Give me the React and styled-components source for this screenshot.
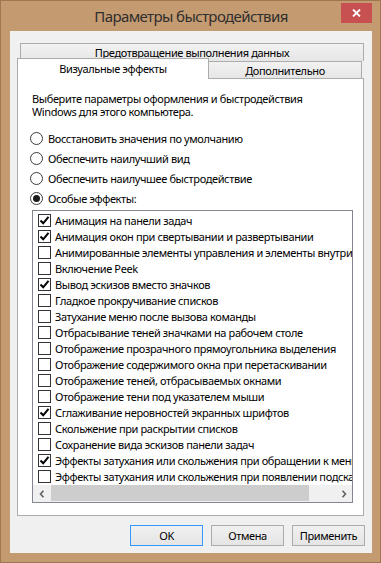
import React from 'react';
import styled, { createGlobalStyle } from 'styled-components';

const FONT = `"Segoe UI", "Noto Sans", "Open Sans", sans-serif`;

const Global = createGlobalStyle`
  html, body { margin: 0; padding: 0; background: #ffffff; }
  body { font-family: ${FONT}; font-size: 11px; letter-spacing: -0.38px; color: #000; }
  * { box-sizing: border-box; }
`;

const Window = styled.div`
  width: 381px;
  height: 563px;
  background: #c49a70;
  border: 1px solid #a07650;
  padding: 0 8px 9px 9px;
  display: flex;
  flex-direction: column;
`;

const TitleBar = styled.div`
  height: 30px;
  flex: 0 0 30px;
  display: grid;
  grid-template-columns: 31px 1fr 31px;
`;

const Title = styled.div`
  grid-column: 2;
  text-align: center;
  font-size: 15px;
  letter-spacing: -0.6px;
  line-height: 30px;
  color: #2e2e2e;
  white-space: nowrap;
`;

const CloseButton = styled.div`
  grid-column: 3;
  width: 31px;
  height: 20px;
  margin-top: 2px;
  background: #c75050;
  display: flex;
  align-items: center;
  justify-content: center;
`;

const Client = styled.div`
  flex: 1;
  background: #f0f0f0;
  display: flex;
  flex-direction: column;
  padding: 12px 8px 6px 7px;
`;

const TabRow1 = styled.div`
  display: flex;
  margin-left: 3px;
`;

const Tab = styled.div`
  height: ${p => p.$h}px;
  width: ${p => p.$w}px;
  flex: 0 0 ${p => p.$w}px;
  border: 1px solid #acacac;
  border-bottom: none;
  background: ${p => (p.$active ? '#ffffff' : 'linear-gradient(#f2f2f2, #e6e6e6)')};
  display: flex;
  align-items: center;
  justify-content: center;
  padding-bottom: ${p => (p.$active ? 2 : 0)}px;
  white-space: nowrap;
  position: relative;
  z-index: ${p => (p.$active ? 2 : 1)};
  margin-left: ${p => p.$ml || 0}px;
  margin-bottom: ${p => p.$mb || 0}px;
`;

const TabRow2 = styled.div`
  display: flex;
  align-items: flex-end;
  height: 20px;
  margin-top: -3px;
`;

const Panel = styled.div`
  height: 438px;
  flex: 0 0 438px;
  background: #ffffff;
  border: 1px solid #acacac;
  display: flex;
  flex-direction: column;
  padding: 13px 10px 0 14px;
`;

const Intro = styled.div`
  line-height: 13px;
`;

const RadioGroup = styled.div`
  display: flex;
  flex-direction: column;
  margin-top: 10px;
  margin-left: -2px;
`;

const RadioRow = styled.div`
  height: 20px;
  display: flex;
  align-items: center;
  gap: 5px;
  white-space: nowrap;
`;

const RadioCircle = styled.span`
  width: 13px;
  height: 13px;
  flex: 0 0 13px;
  border-radius: 50%;
  border: 1px solid #3c3c3c;
  background: #fff;
  display: flex;
  align-items: center;
  justify-content: center;
  &::after {
    content: '';
    width: 7px;
    height: 7px;
    border-radius: 50%;
    background: ${p => (p.$checked ? '#1a1a1a' : 'transparent')};
  }
`;

const ListBox = styled.div`
  margin-top: 2px;
  width: 321px;
  height: 293px;
  border: 1px solid #828790;
  background: #fff;
  display: flex;
  flex-direction: column;
  overflow: hidden;
  padding-top: 1px;
`;

const ListRows = styled.div`
  flex: 1;
  overflow: hidden;
`;

const ListRow = styled.div`
  height: 16px;
  display: flex;
  align-items: center;
  gap: 4px;
  padding-left: 5px;
  white-space: nowrap;
`;

const CheckBox = styled.span`
  width: 13px;
  height: 13px;
  flex: 0 0 13px;
  border: 1px solid #333333;
  background: #fff;
  display: flex;
  align-items: center;
  justify-content: center;
`;

const ScrollBar = styled.div`
  height: 17px;
  flex: 0 0 17px;
  display: flex;
  background: #f0f0f0;
`;

const ScrollArrow = styled.div`
  width: 17px;
  flex: 0 0 17px;
  display: flex;
  align-items: center;
  justify-content: center;
`;

const ScrollThumb = styled.div`
  flex: 0 0 258px;
  margin: 0 0 1px 1px;
  background: #cdcdcd;
`;

const ScrollTrack = styled.div`
  flex: 1;
`;

const Buttons = styled.div`
  display: flex;
  justify-content: flex-end;
  gap: 8px;
  margin-top: 9px;
  margin-right: -1px;
`;

const Button = styled.div`
  width: 73px;
  height: 21px;
  border: 1px solid ${p => (p.$default ? '#3399ff' : '#acacac')};
  background: linear-gradient(#f0f0f0, #e5e5e5);
  display: flex;
  align-items: center;
  justify-content: center;
  font-size: 11px;
`;

const Check = () => (
  <svg width="11" height="11" viewBox="0 0 11 11">
    <path d="M1.5 5.5 L4.2 8.3 L9.5 1.8" fill="none" stroke="#000" strokeWidth="2" />
  </svg>
);

const Chevron = ({ dir }) => (
  <svg width="6" height="8" viewBox="0 0 6 8">
    <path
      d={dir === 'left' ? 'M4.5 0.8 L1.5 4 L4.5 7.2' : 'M1.5 0.8 L4.5 4 L1.5 7.2'}
      fill="none"
      stroke="#606060"
      strokeWidth="1.6"
    />
  </svg>
);

const items = [
  ['Анимация на панели задач', true],
  ['Анимация окон при свертывании и развертывании', true],
  ['Анимированные элементы управления и элементы внутри окна', false],
  ['Включение Peek', false],
  ['Вывод эскизов вместо значков', true],
  ['Гладкое прокручивание списков', false],
  ['Затухание меню после вызова команды', false],
  ['Отбрасывание теней значками на рабочем столе', false],
  ['Отображение прозрачного прямоугольника выделения', false],
  ['Отображение содержимого окна при перетаскивании', false],
  ['Отображение теней, отбрасываемых окнами', false],
  ['Отображение тени под указателем мыши', false],
  ['Сглаживание неровностей экранных шрифтов', true],
  ['Скольжение при раскрытии списков', false],
  ['Сохранение вида эскизов панели задач', false],
  ['Эффекты затухания или скольжения при обращении к меню', true],
  ['Эффекты затухания или скольжения при появлении подсказок', false],
];

const radios = [
  ['Восстановить значения по умолчанию', false],
  ['Обеспечить наилучший вид', false],
  ['Обеспечить наилучшее быстродействие', false],
  ['Особые эффекты:', true],
];

export default function App() {
  return (
    <>
      <Global />
      <Window>
        <TitleBar>
          <Title>Параметры быстродействия</Title>
          <CloseButton>
            <svg width="9" height="8" viewBox="0 0 9 8">
              <path d="M1 0.5 L8 7.5 M8 0.5 L1 7.5" stroke="#fff" strokeWidth="1.8" />
            </svg>
          </CloseButton>
        </TitleBar>
        <Client>
          <TabRow1>
            <Tab $w={344} $h={18}>Предотвращение выполнения данных</Tab>
          </TabRow1>
          <TabRow2>
            <Tab $w={192} $h={21} $active $mb={-1}>Визуальные эффекты</Tab>
            <Tab $w={154} $h={17} $ml={-1}>Дополнительно</Tab>
          </TabRow2>
          <Panel>
            <Intro>
              Выберите параметры оформления и быстродействия
              <br />
              Windows для этого компьютера.
            </Intro>
            <RadioGroup>
              {radios.map(([label, checked]) => (
                <RadioRow key={label}>
                  <RadioCircle $checked={checked} />
                  {label}
                </RadioRow>
              ))}
            </RadioGroup>
            <ListBox>
              <ListRows>
                {items.map(([label, checked]) => (
                  <ListRow key={label}>
                    <CheckBox>{checked && <Check />}</CheckBox>
                    {label}
                  </ListRow>
                ))}
              </ListRows>
              <ScrollBar>
                <ScrollArrow>
                  <Chevron dir="left" />
                </ScrollArrow>
                <ScrollThumb />
                <ScrollTrack />
                <ScrollArrow>
                  <Chevron dir="right" />
                </ScrollArrow>
              </ScrollBar>
            </ListBox>
          </Panel>
          <Buttons>
            <Button $default>OK</Button>
            <Button>Отмена</Button>
            <Button>Применить</Button>
          </Buttons>
        </Client>
      </Window>
    </>
  );
}
